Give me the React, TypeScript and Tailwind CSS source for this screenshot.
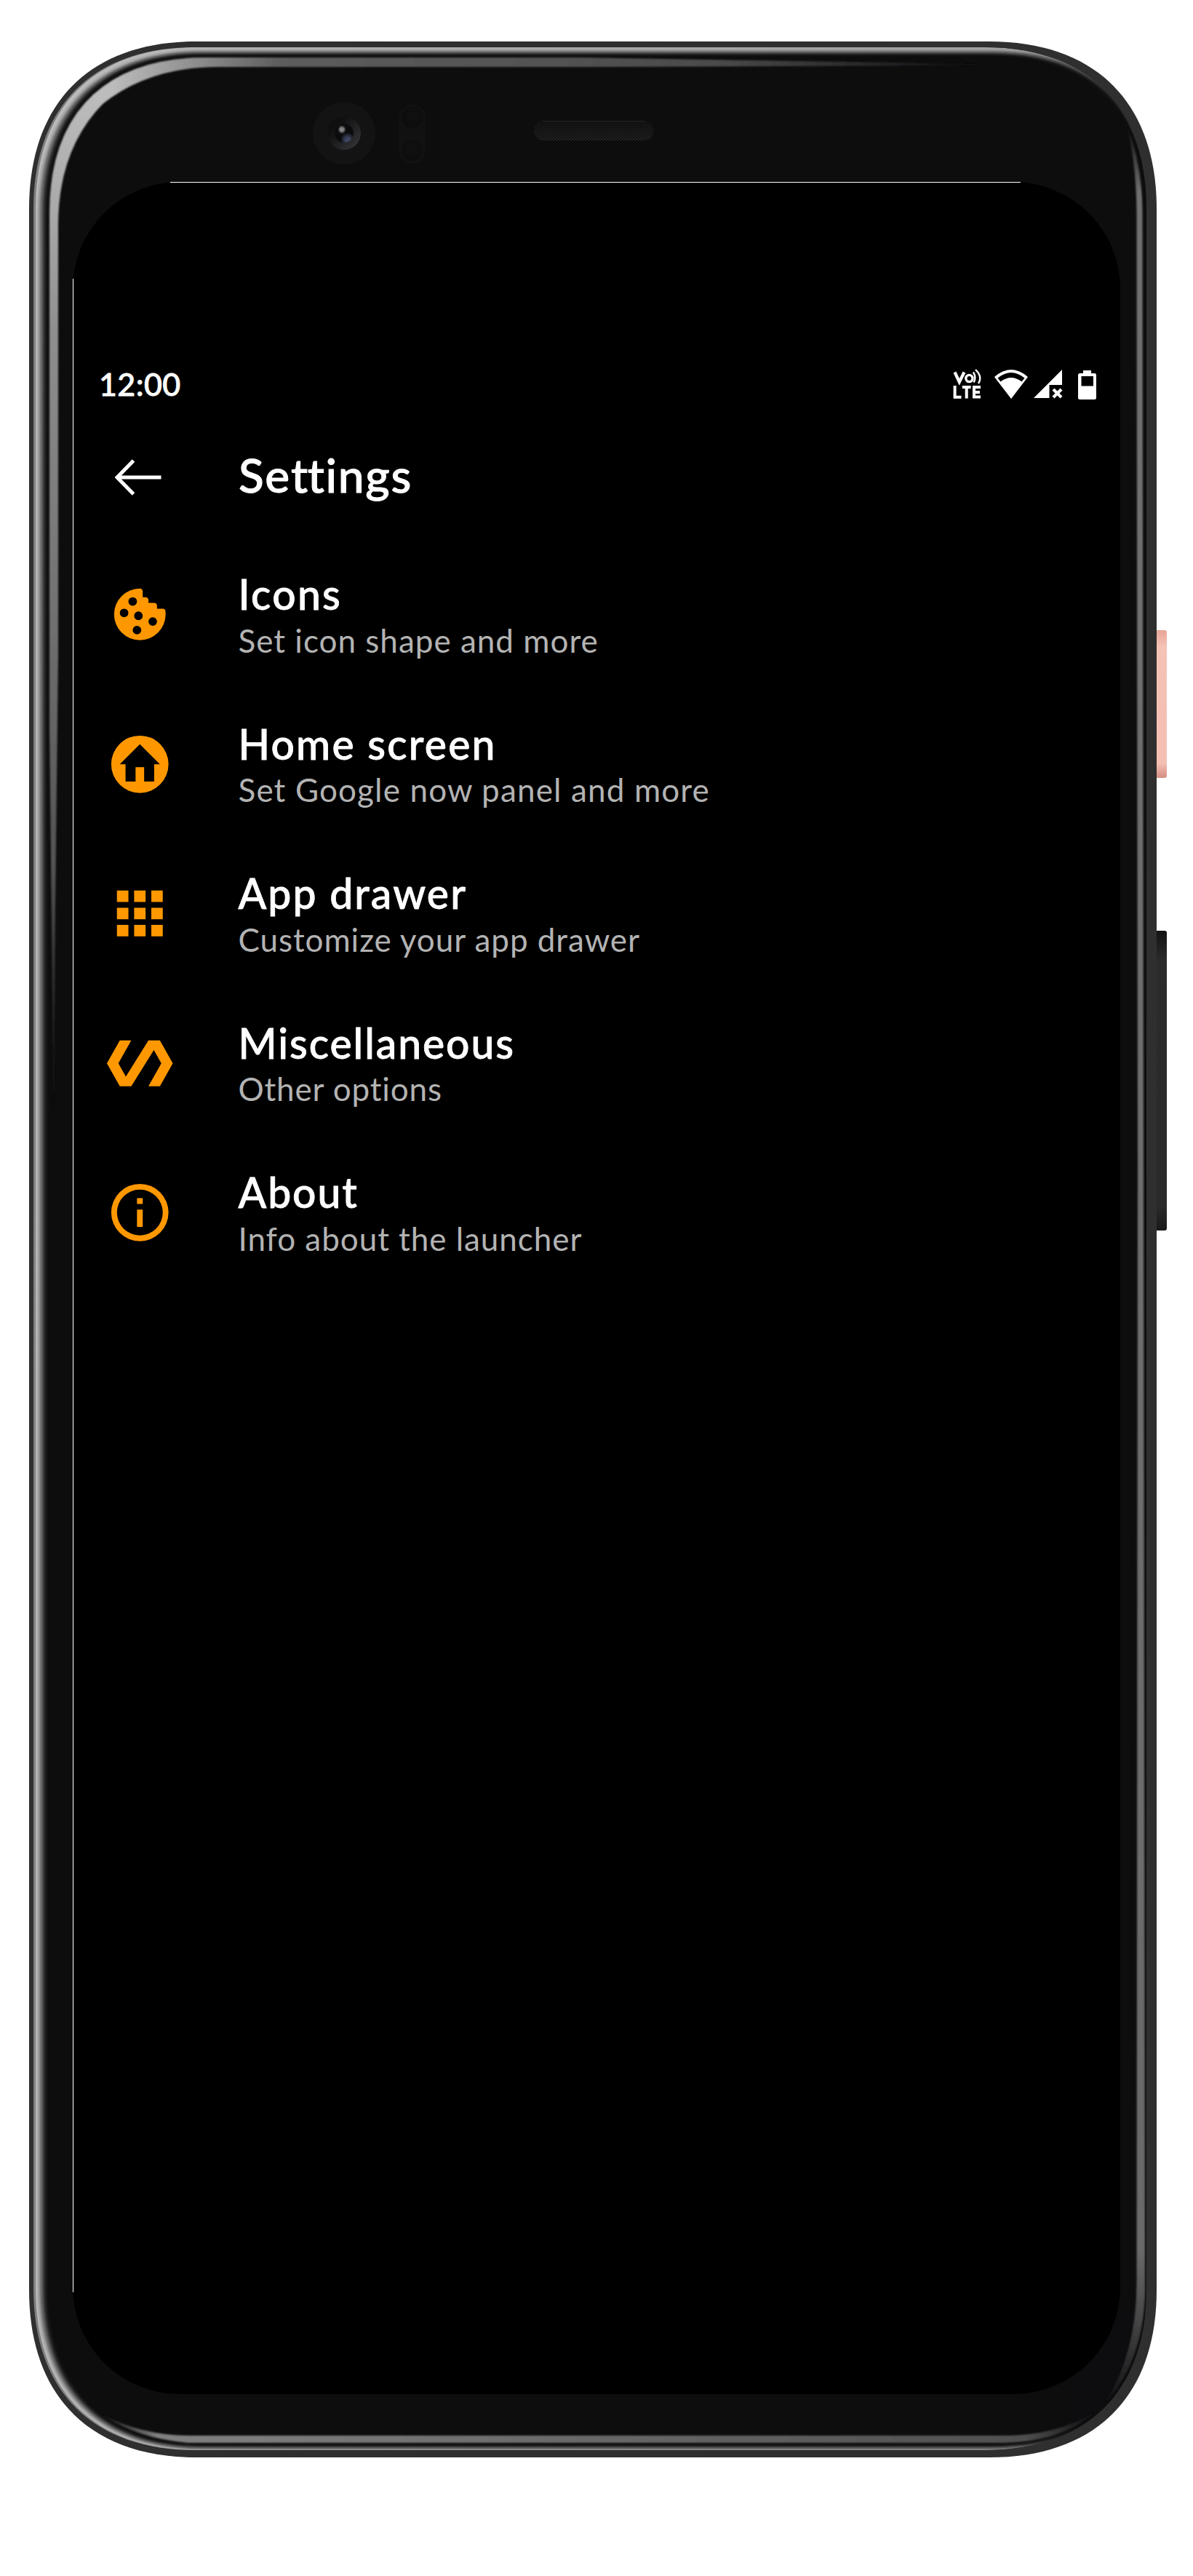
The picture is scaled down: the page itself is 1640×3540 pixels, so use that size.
import React from "react";

const ORANGE = "#ff9800";

// Rounded rectangle whose corners ease into the straight sides.
function softRect(l: number, t: number, r: number, b: number, size: number) {
  const c = size * 0.365;
  return [
    `M${l + size} ${t} H${r - size}`,
    `C${r - c} ${t} ${r} ${t + c} ${r} ${t + size}`,
    `V${b - size}`,
    `C${r} ${b - c} ${r - c} ${b} ${r - size} ${b}`,
    `H${l + size}`,
    `C${l + c} ${b} ${l} ${b - c} ${l} ${b - size}`,
    `V${t + size}`,
    `C${l} ${t + c} ${l + c} ${t} ${l + size} ${t} Z`,
  ].join(" ");
}

function DeviceFrame() {
  return (
    <svg className="absolute left-0 top-0" width="1640" height="3540" viewBox="0 0 1640 3540" fill="none" aria-hidden="true">
      <defs>
        <linearGradient id="rim" gradientUnits="userSpaceOnUse" x1="46" y1="0" x2="1576" y2="0">
          <stop offset="0" stopColor="#c0c0c2" />
          <stop offset="0.2" stopColor="#b0b0b0" />
          <stop offset="0.88" stopColor="#a2a2a2" />
          <stop offset="0.95" stopColor="#808080" />
          <stop offset="0.99" stopColor="#505050" />
          <stop offset="1" stopColor="#2a2a2a" />
        </linearGradient>
        <linearGradient id="rimShade" gradientUnits="userSpaceOnUse" x1="1400" y1="0" x2="1490" y2="0">
          <stop offset="0" stopColor="#0d0d0f" stopOpacity="0" />
          <stop offset="1" stopColor="#0d0d0f" />
        </linearGradient>
        <linearGradient id="leftStrip" gradientUnits="userSpaceOnUse" x1="0" y1="130" x2="0" y2="1540">
          <stop offset="0" stopColor="#bcbcbc" />
          <stop offset="0.12" stopColor="#a8a8a8" />
          <stop offset="0.23" stopColor="#8f8f8f" />
          <stop offset="0.5" stopColor="#727272" />
          <stop offset="0.76" stopColor="#525252" />
          <stop offset="0.86" stopColor="#303030" />
          <stop offset="1" stopColor="#0d0d0f" />
        </linearGradient>
        <linearGradient id="topStrip" gradientUnits="userSpaceOnUse" x1="130" y1="0" x2="1345" y2="0">
          <stop offset="0" stopColor="#bcbcbc" />
          <stop offset="0.02" stopColor="#bcbcbc" />
          <stop offset="0.12" stopColor="#8b8b8b" />
          <stop offset="0.21" stopColor="#5d5d5d" />
          <stop offset="0.7" stopColor="#4c4c4c" />
          <stop offset="1" stopColor="#0d0d0f" />
        </linearGradient>
        <linearGradient id="rightStrip" gradientUnits="userSpaceOnUse" x1="0" y1="170" x2="0" y2="3310">
          <stop offset="0" stopColor="#0d0d0f" />
          <stop offset="0.03" stopColor="#707070" />
          <stop offset="0.93" stopColor="#6b6b6b" />
          <stop offset="0.96" stopColor="#484848" />
          <stop offset="1" stopColor="#0d0d0f" />
        </linearGradient>
        <linearGradient id="bottomStrip" gradientUnits="userSpaceOnUse" x1="135" y1="0" x2="1505" y2="0">
          <stop offset="0" stopColor="#0d0d0f" />
          <stop offset="0.06" stopColor="#808080" />
          <stop offset="0.3" stopColor="#747474" />
          <stop offset="0.93" stopColor="#505050" />
          <stop offset="1" stopColor="#0d0d0f" />
        </linearGradient>
        <linearGradient id="power" x1="0" y1="0" x2="0" y2="1">
          <stop offset="0" stopColor="#e8a598" />
          <stop offset="0.11" stopColor="#f5c2b6" />
          <stop offset="0.9" stopColor="#f4bfb3" />
          <stop offset="1" stopColor="#d68d83" />
        </linearGradient>
        <linearGradient id="volume" x1="0" y1="0" x2="0" y2="1">
          <stop offset="0" stopColor="#131313" />
          <stop offset="0.1" stopColor="#2b2b2b" />
          <stop offset="0.92" stopColor="#2a2a2a" />
          <stop offset="1" stopColor="#191919" />
        </linearGradient>
        <linearGradient id="lensRing" x1="0.1" y1="0.1" x2="0.9" y2="0.9">
          <stop offset="0.2" stopColor="#0f0f10" />
          <stop offset="1" stopColor="#343437" />
        </linearGradient>
        <radialGradient id="lensBlue" gradientUnits="userSpaceOnUse" cx="478" cy="192" r="10">
          <stop offset="0.3" stopColor="#3d4560" />
          <stop offset="1" stopColor="#0b0b0e" />
        </radialGradient>
        <radialGradient id="sensor" cx="0.55" cy="0.45" r="0.5">
          <stop offset="0" stopColor="#111111" />
          <stop offset="1" stopColor="#0d0d0d" />
        </radialGradient>
        <linearGradient id="meshShade" x1="0" y1="0" x2="0" y2="1">
          <stop offset="0" stopColor="#0b0b0c" stopOpacity="0.6" />
          <stop offset="1" stopColor="#0b0b0c" stopOpacity="0" />
        </linearGradient>
        <pattern id="mesh" width="4" height="4" patternUnits="userSpaceOnUse">
          <rect width="4" height="4" fill="#0f0f0f" />
          <rect width="2" height="2" fill="#262626" />
          <rect x="2" y="2" width="2" height="2" fill="#262626" />
        </pattern>
        <filter id="soften" filterUnits="userSpaceOnUse" x="0" y="0" width="1640" height="3540">
          <feGaussianBlur stdDeviation="4.2 2.4" />
        </filter>
        <filter id="edge" filterUnits="userSpaceOnUse" x="0" y="0" width="1640" height="3540">
          <feGaussianBlur stdDeviation="0.8" />
        </filter>
        <clipPath id="rimClip">
          <path d={softRect(46, 65, 1576, 3367, 222)} />
        </clipPath>
      </defs>

      <rect x="1586" y="866" width="18" height="203" rx="3" fill="url(#power)" />
      <rect x="1586" y="1279" width="18" height="412" rx="3" fill="url(#volume)" />

      <path d={softRect(40, 57, 1590, 3377, 230)} fill="#2f2f2f" />
      <g clipPath="url(#rimClip)">
        <rect x="46" y="65" width="900" height="3302" fill="#808080" />
        <path d={softRect(49, 65, 1576, 3367, 222)} fill="url(#rim)" />
        <path d={softRect(57, 72, 1585, 3364, 220)} fill="#0b0b0d" filter="url(#soften)" />
        <rect x="1400" y="3180" width="180" height="190" fill="url(#rimShade)" />
      </g>
      <g filter="url(#edge)">
        <path d="M74 1540 L68 1000 L68 292 Q68 185 129 129 L142 142 Q80 205 80 310 L80 900 L76 1250 Z" fill="url(#leftStrip)" />
        <path d="M128 130 Q184 79 282 79 L800 79 L1345 88 L1345 90 L800 92 L300 92 Q205 92 141 143 Z" fill="url(#topStrip)" />
        <path d="M1549 172 Q1570 225 1570.5 290 L1572 1600 L1574 3150 Q1572 3245 1518 3304 Q1562 3235 1562.5 3140 L1564 1600 L1562.5 290 Q1562 225 1549 172 Z" fill="url(#rightStrip)" />
        <path d="M138 3317 Q195 3347 260 3347 L1390 3347 Q1455 3345 1505 3315 Q1462 3355 1380 3357 L260 3357 Q190 3352 138 3317 Z" fill="url(#bottomStrip)" />
      </g>
      <path d="M247 250 H1393 A147 147 0 0 1 1540 397 V3143 A147 147 0 0 1 1393 3290 H247 A147 147 0 0 1 100 3143 V397 A147 147 0 0 1 247 250 Z" fill="#000" />
      <path d="M234 250.5 H1403" stroke="#fff" />
      <path d="M100.5 383 V3150" stroke="#fff" />

      <circle cx="473" cy="183" r="43" fill="#131313" />
      <circle cx="473" cy="183" r="23" fill="url(#lensRing)" />
      <circle cx="473" cy="183" r="13" fill="url(#lensBlue)" />
      <circle cx="470" cy="178" r="4.2" fill="#858585" filter="url(#edge)" />
      <rect x="548" y="143" width="37" height="82" rx="18.5" fill="#111" />
      <circle cx="566.5" cy="161" r="14.5" fill="url(#sensor)" />
      <circle cx="566.5" cy="206.5" r="14.5" fill="url(#sensor)" />
      <rect x="734" y="166" width="164" height="27" rx="13" fill="url(#mesh)" />
      <rect x="734" y="166" width="164" height="27" rx="13" fill="url(#meshShade)" />
      <path d="M746 166.5 H886" stroke="#25252a" />
    </svg>
  );
}

function VolteIcon() {
  return (
    <svg width="40" height="42" viewBox="0 0 40 42" fill="none" stroke="#fff">
      <path d="M2.5 4.5 L8.8 18 L15.5 4.5" strokeWidth="4.2" />
      <circle cx="22.4" cy="13" r="4.6" strokeWidth="3.4" />
      <path d="M28 4.5 Q32.5 11.5 28.5 18.5 M31 1 Q41 10.500 35 20" strokeWidth="2.4" />
      <path d="M2.600 23 V38.700 H11.500 M12.800 25 H24.600 M18.700 25 V40.500 M38 25 H29 V38.600 H38 M29 31.900 H37" strokeWidth="4" />
    </svg>
  );
}

function WifiIcon() {
  return (
    <svg width="46" height="40" viewBox="0 0 46 40" fill="#fff" fillRule="evenodd">
      <path d="M0 10 Q23 -10 46 10 L23 40 Z M4.500 11.500 L8.500 16.500 Q23 5.500 37.500 16.500 L41.500 11.500 Q23 -3.500 4.500 11.500 Z" />
    </svg>
  );
}

function SignalIcon() {
  return (
    <svg width="40" height="40" viewBox="0 0 40 40">
      <path d="M39 0 V21 H21.500 V39 H0 Z" fill="#fff" />
      <path d="M27 27 L38 38 M38 27 L27 38" stroke="#fff" strokeWidth="4.200" />
    </svg>
  );
}

function BatteryIcon() {
  return (
    <svg width="25" height="40" viewBox="0 0 25 40" fill="#fff" fillRule="evenodd">
      <path d="M7 0 H18 V4 H22.500 Q25 4 25 6.500 V37.500 Q25 40 22.500 40 H2.500 Q0 40 0 37.500 V6.500 Q0 4 2.500 4 H7 Z M4.500 8 V21.500 H21 V8 Z" />
    </svg>
  );
}

const paths = {
  cookie:
    "M12,3A9,9 0 0,0 3,12A9,9 0 0,0 12,21A9,9 0 0,0 21,12C21,11.5 20.96,11 20.87,10.5C20.6,10 20,10 20,10H18V9C18,8 17,8 17,8H15V7C15,6 14,6 14,6H13V4C13,3 12,3 12,3M9.5,6A1.5,1.5 0 0,1 11,7.5A1.5,1.5 0 0,1 9.5,9A1.5,1.5 0 0,1 8,7.5A1.5,1.5 0 0,1 9.5,6M6.5,10A1.5,1.5 0 0,1 8,11.5A1.5,1.5 0 0,1 6.5,13A1.5,1.5 0 0,1 5,11.5A1.5,1.5 0 0,1 6.5,10M11.5,11A1.5,1.5 0 0,1 13,12.5A1.5,1.5 0 0,1 11.5,14A1.5,1.5 0 0,1 10,12.5A1.5,1.5 0 0,1 11.5,11M16.5,13A1.5,1.5 0 0,1 18,14.5A1.5,1.5 0 0,1 16.5,16A1.5,1.5 0 0,1 15,14.5A1.5,1.5 0 0,1 16.5,13M11,16A1.5,1.5 0 0,1 12.5,17.5A1.5,1.5 0 0,1 11,19A1.5,1.5 0 0,1 9.5,17.5A1.5,1.5 0 0,1 11,16Z",
  home: "M12 2A10 10 0 1 0 12 22A10 10 0 1 0 12 2ZM12 5L19 12H17V18H13.5V13H10.5V18H7V12H5Z",
  grid: "M4 4h4v4H4zM10 4h4v4h-4zM16 4h4v4h-4zM4 10h4v4H4zM10 10h4v4h-4zM16 10h4v4h-4zM4 16h4v4H4zM10 16h4v4h-4zM16 16h4v4h-4z",
  polymer: "M19 4h-4L7.11 16.63 4.5 12 9 4H5L.5 12 5 20h4l7.89-12.63L19.5 12 15 20h4l4.5-8L19 4z",
  info: "M11 7h2v2h-2V7zM11 11h2v6h-2V11zM12 2A10 10 0 1 0 12 22A10 10 0 1 0 12 2ZM12 4A8 8 0 1 1 12 20A8 8 0 1 1 12 4Z",
};

const items = [
  { icon: paths.cookie, title: "Icons", sub: "Set icon shape and more", t: "tracking-[2.3px]", s: "tracking-[1px]" },
  { icon: paths.home, title: "Home screen", sub: "Set Google now panel and more", t: "tracking-[2.2px]", s: "tracking-[1.15px]" },
  { icon: paths.grid, title: "App drawer", sub: "Customize your app drawer", t: "tracking-[2.1px]", s: "tracking-[0.95px]" },
  { icon: paths.polymer, title: "Miscellaneous", sub: "Other options", t: "tracking-[1.95px]", s: "tracking-[0.85px]" },
  { icon: paths.info, title: "About", sub: "Info about the launcher", t: "tracking-[1.9px]", s: "tracking-[0.95px]" },
];

export default function App() {
  return (
    <div className="relative h-[3540px] w-[1640px] overflow-hidden bg-white font-['Lato',sans-serif] text-white">
      <DeviceFrame />
      <main className="relative ml-[100px] w-[1440px] pt-[500px]">
        <div className="flex h-[56px] items-center justify-between pl-[36px] pr-[33px]">
          <span className="text-[43px] font-medium leading-[56px] tracking-[0.4px] [-webkit-text-stroke:0.8px_#fff]">12:00</span>
          <div className="flex items-center">
            <VolteIcon />
            <div className="ml-[17px]"><WifiIcon /></div>
            <div className="ml-[8px]"><SignalIcon /></div>
            <div className="ml-[21px] mt-[1px]"><BatteryIcon /></div>
          </div>
        </div>

        <header className="flex h-[186px] items-start pt-[60px]">
          <svg className="ml-[58px] mt-[14px]" width="64" height="52" viewBox="0 0 64 52" fill="none" stroke="#fff" strokeWidth="5">
            <path d="M25.500 3 L3 26 L25.500 49 M3 26 H63.500" />
          </svg>
          <h1 className="-mt-[2px] ml-[106px] whitespace-nowrap text-[64px] font-medium leading-[78px] tracking-[1.7px] [-webkit-text-stroke:1px_#fff]">
            Se<span className="tracking-[-0.5px]">t</span>tings
          </h1>
        </header>

        <ul>
          {items.map((item) => (
            <li key={item.title} className="flex h-[205.5px] items-start">
              <svg className="ml-[45px] mt-[55px] shrink-0" width="94.500" height="94.500" viewBox="0 0 24 24" fill={ORANGE} fillRule="evenodd">
                <path d={item.icon} />
              </svg>
              <div className="ml-[88px] pt-[40px]">
                <div className={"whitespace-nowrap text-[57px] font-medium leading-[68px] [-webkit-text-stroke:0.8px_#fff] " + item.t}>{item.title}</div>
                <div className={"mt-[2.5px] whitespace-nowrap text-[44px] leading-[54px] text-[#b3b3b3] " + item.s}>{item.sub}</div>
              </div>
            </li>
          ))}
        </ul>
      </main>
    </div>
  );
}
